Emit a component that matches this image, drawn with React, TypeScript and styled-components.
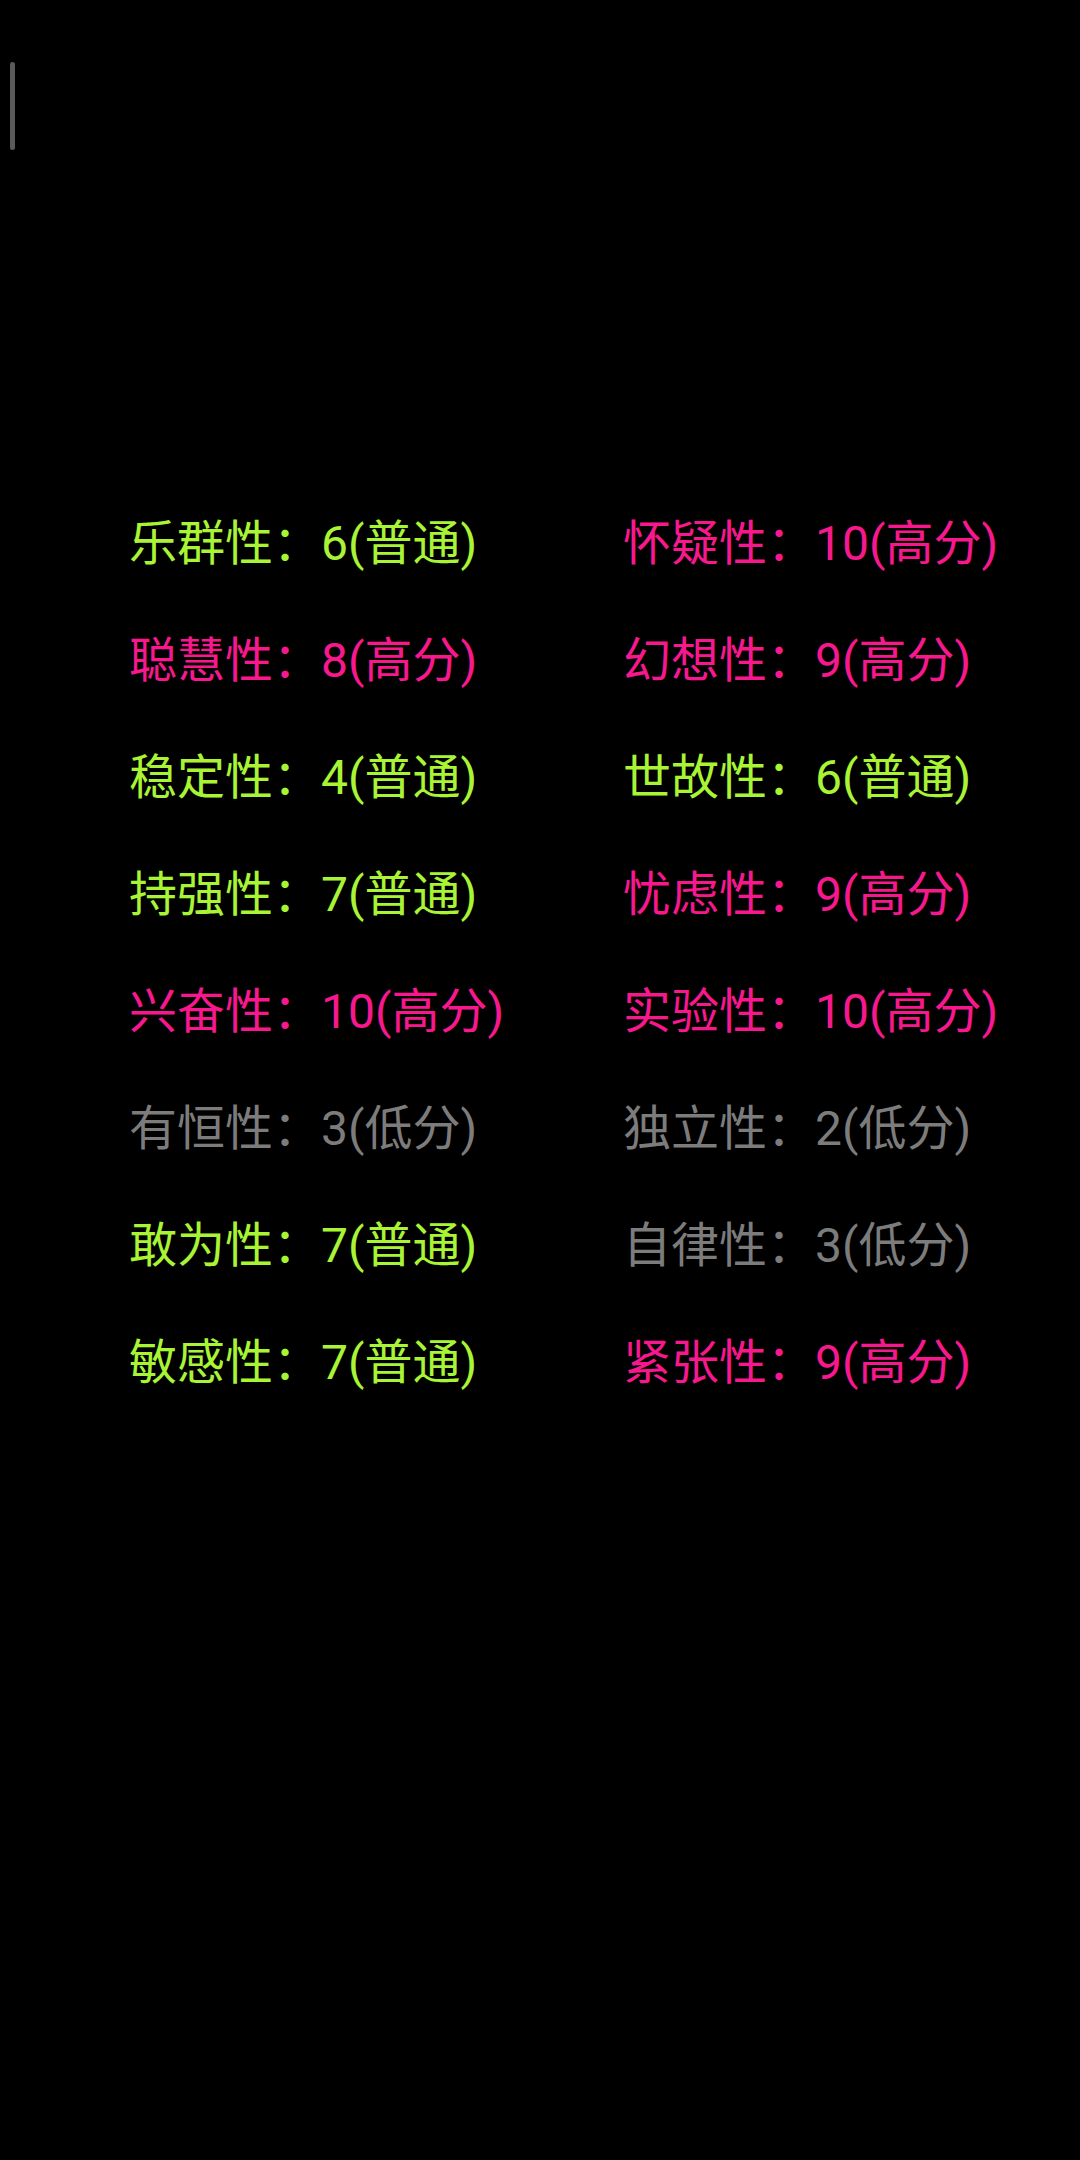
import React from "react";
import styled, { createGlobalStyle } from "styled-components";

const Global = createGlobalStyle`
  html, body {
    margin: 0;
    padding: 0;
    background: #000;
  }
  body {
    font-family: Roboto, "Noto Sans CJK SC", sans-serif;
  }
`;

const Screen = styled.div`
  position: relative;
  width: 1080px;
  height: 2160px;
  background: #000;
  overflow: hidden;
`;

const ScrollThumb = styled.div`
  position: absolute;
  left: 10px;
  top: 62px;
  width: 5px;
  height: 88px;
  border-radius: 3px;
  background: #5a5a5a;
`;

const Grid = styled.div`
  display: grid;
  grid-template-columns: 494px auto;
  grid-auto-rows: 117px;
  padding: 485px 0 0 129px;
`;

type Level = "high" | "mid" | "low";

const colors: Record<Level, string> = {
  high: "#f8188e",
  mid: "#a8f435",
  low: "#7c7c7c",
};

const Trait = styled.div<{ $level: Level }>`
  font-size: 48px;
  line-height: 117px;
  white-space: nowrap;
  color: ${(p) => colors[p.$level]};
`;

const labels: Record<Level, string> = { high: "高分", mid: "普通", low: "低分" };

const traits: [string, number, Level][] = [
  ["乐群性", 6, "mid"],
  ["怀疑性", 10, "high"],
  ["聪慧性", 8, "high"],
  ["幻想性", 9, "high"],
  ["稳定性", 4, "mid"],
  ["世故性", 6, "mid"],
  ["持强性", 7, "mid"],
  ["忧虑性", 9, "high"],
  ["兴奋性", 10, "high"],
  ["实验性", 10, "high"],
  ["有恒性", 3, "low"],
  ["独立性", 2, "low"],
  ["敢为性", 7, "mid"],
  ["自律性", 3, "low"],
  ["敏感性", 7, "mid"],
  ["紧张性", 9, "high"],
];

export default function App() {
  return (
    <>
      <Global />
      <Screen>
        <ScrollThumb />
        <Grid>
          {traits.map(([name, score, level]) => (
            <Trait key={name} $level={level}>
              {name}：{score}({labels[level]})
            </Trait>
          ))}
        </Grid>
      </Screen>
    </>
  );
}
